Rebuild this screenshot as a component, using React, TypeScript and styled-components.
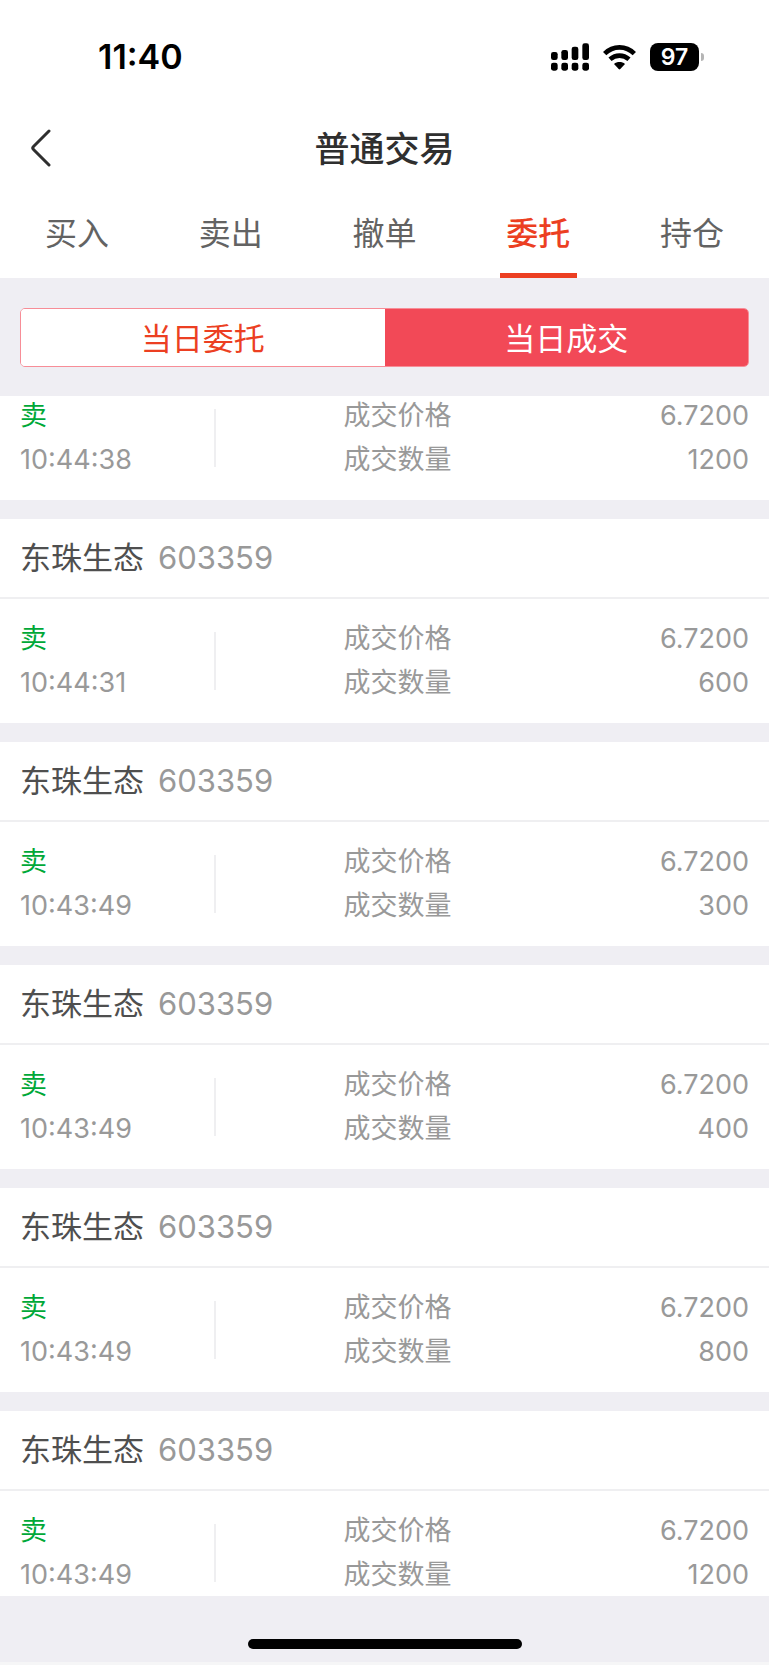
import React from "react";
import styled, { createGlobalStyle, css } from "styled-components";

const colors = {
  ink: "#2f2f2f",
  body: "#4f4f4f",
  tab: "#636363",
  muted: "#999999",
  accent: "#ec3f22",
  fill: "#f24957",
  outline: "#f78d97",
  sell: "#00a838",
  line: "#efeff1",
  canvas: "#efeef3",
};

const GlobalStyle = createGlobalStyle`
  *, *::before, *::after { box-sizing: border-box; }
  body {
    margin: 0;
    background: ${colors.canvas};
    font-family: Inter, "Noto Sans CJK SC", sans-serif;
  }
  button { font-family: inherit; cursor: pointer; }
  h1, h2, dl, dt, dd, p { margin: 0; font-weight: 400; }
`;

const Screen = styled.div`
  display: flex;
  flex-direction: column;
  min-height: 100vh;
`;

const Top = styled.header`
  background: #fff;
`;

const StatusBar = styled.div`
  display: flex;
  align-items: center;
  justify-content: space-between;
  height: 108px;
  padding: 6px 65px 0 98px;
  color: #000;
`;

const Clock = styled.time`
  font-size: 34px;
  line-height: 40px;
  font-weight: 600;
`;

const StatusIcons = styled.div`
  display: flex;
  align-items: center;
  gap: 14px;
`;

const Battery = styled.div`
  display: flex;
  align-items: center;
  gap: 2px;
`;

const BatteryLevel = styled.span`
  width: 49px;
  height: 28px;
  border-radius: 8px;
  background: #000;
  color: #fff;
  font-size: 23px;
  line-height: 28px;
  font-weight: 600;
  text-align: center;
`;

const BatteryTip = styled.span`
  width: 3px;
  height: 8px;
  border-radius: 0 4px 4px 0;
  background: #b5b5b5;
`;

const TitleBar = styled.div`
  display: grid;
  grid-template-columns: 80px 1fr 80px;
  align-items: center;
  height: 80px;
`;

const BackButton = styled.button`
  display: flex;
  align-items: center;
  height: 80px;
  padding: 0 0 0 30px;
  border: 0;
  background: none;
  color: ${colors.ink};
`;

const Title = styled.h1`
  && { font-weight: 500; }
  padding-top: 2px;
  font-size: 35px;
  line-height: 48px;
  text-align: center;
  color: ${colors.ink};
`;

const Tabs = styled.nav`
  display: grid;
  grid-template-columns: repeat(5, 1fr);
  height: 90px;
`;

const Tab = styled.button<{ $active: boolean }>`
  position: relative;
  padding: 2px 0 0;
  border: 0;
  background: none;
  font-size: 32px;
  line-height: 48px;
  color: ${colors.tab};
  ${(p) =>
    p.$active &&
    css`
      color: ${colors.accent};
      font-weight: 500;
      &::after {
        content: "";
        position: absolute;
        left: 25%;
        right: 25%;
        bottom: 0;
        height: 5px;
        background: ${colors.accent};
      }
    `}
`;

const SegmentBar = styled.div`
  padding: 30px 20px 29px;
`;

const Segments = styled.div`
  display: grid;
  grid-template-columns: 1fr 1fr;
  height: 59px;
  border: 1px solid ${colors.outline};
  border-radius: 5px;
  overflow: hidden;
`;

const Segment = styled.button<{ $active: boolean }>`
  padding: 2px 0 0;
  border: 0;
  font-size: 31px;
  line-height: 48px;
  background: ${(p) => (p.$active ? colors.fill : "#fff")};
  color: ${(p) => (p.$active ? "#fff" : colors.accent)};
`;

const TradeList = styled.main`
  display: flex;
  flex-direction: column;
  gap: 19px;
`;

const Card = styled.article`
  background: #fff;
`;

const CardHead = styled.h2`
  display: flex;
  align-items: center;
  gap: 14px;
  height: 80px;
  padding: 0 20px;
  border-bottom: 2px solid ${colors.line};
  font-size: 31px;
  line-height: 48px;
`;

const StockName = styled.span`
  color: ${colors.body};
`;

const StockCode = styled.span`
  color: ${colors.muted};
`;

type Edge = "top" | "bottom";

const CardBody = styled.div<{ $cut?: Edge }>`
  display: grid;
  grid-template-columns: 97fr 2px 64fr 203fr;
  align-items: center;
  padding: ${(p) => (p.$cut === "top" ? 2 : 22)}px 20px ${(p) => (p.$cut === "bottom" ? 3 : 22)}px;
  font-size: 27px;
  line-height: 36px;
  color: ${colors.muted};
`;

const Stack = styled.div`
  display: flex;
  flex-direction: column;
  gap: 8px;
`;

const Side = styled.p`
  color: ${colors.sell};
`;

const Divider = styled.span`
  height: 58px;
  background: ${colors.line};
`;

const Fields = styled(Stack).attrs({ as: "dl" })`
  grid-column: 4;
`;

const Field = styled.div`
  display: flex;
  justify-content: space-between;
`;

const Footer = styled.footer`
  display: flex;
  justify-content: center;
  align-items: flex-end;
  flex: 1;
  min-height: 69px;
  padding-bottom: 13px;
  border-bottom: 3px solid #f6f6f7;
`;

const HomeIndicator = styled.span`
  width: 274px;
  height: 10px;
  border-radius: 5px;
  background: #000;
`;

const SignalIcon = () => (
  <svg width="38" height="28" viewBox="0 0 114 84" aria-hidden="true">
    <rect x="0" y="27" width="20" height="24" rx="7" />
    <rect x="31" y="21" width="20" height="30" rx="7" />
    <rect x="62" y="11" width="20" height="40" rx="7" />
    <rect x="94" y="1" width="20" height="50" rx="7" />
    <rect x="0" y="59" width="20" height="24" rx="7" />
    <rect x="31" y="59" width="20" height="24" rx="7" />
    <rect x="62" y="59" width="20" height="24" rx="7" />
    <rect x="94" y="59" width="20" height="24" rx="7" />
  </svg>
);

const WifiIcon = () => (
  <svg width="33" height="25" viewBox="0 0 99 75" aria-hidden="true">
    <g fill="none" stroke="#000" strokeWidth="14">
      <path d="M5 26 C30 1 69 1 94 26" />
      <path d="M21 43 C38 28 61 28 78 43" />
    </g>
    <path d="M33 57 C42 49 57 49 66 57 L52 72 Q49.500 74.500 47 72 Z" />
  </svg>
);

const BackIcon = () => (
  <svg width="21" height="38" viewBox="0 0 21 38" fill="none" stroke="currentColor" strokeWidth="3" strokeLinecap="round" strokeLinejoin="round" aria-hidden="true">
    <path d="M19 2 L3.500 17.500 Q2 19 3.500 20.500 L19 36" />
  </svg>
);

interface Trade {
  time: string;
  price: string;
  amount: string;
  cut?: Edge;
}

const trades: Trade[] = [
  { time: "10:44:38", price: "6.7200", amount: "1200", cut: "top" },
  { time: "10:44:31", price: "6.7200", amount: "600" },
  { time: "10:43:49", price: "6.7200", amount: "300" },
  { time: "10:43:49", price: "6.7200", amount: "400" },
  { time: "10:43:49", price: "6.7200", amount: "800" },
  { time: "10:43:49", price: "6.7200", amount: "1200", cut: "bottom" },
];

const TradeCard = ({ time, price, amount, cut }: Trade) => (
  <Card>
    {cut !== "top" && (
      <CardHead>
        <StockName>东珠生态</StockName>
        <StockCode>603359</StockCode>
      </CardHead>
    )}
    <CardBody $cut={cut}>
      <Stack>
        <Side>卖</Side>
        <time>{time}</time>
      </Stack>
      <Divider />
      <Fields>
        <Field>
          <dt>成交价格</dt>
          <dd>{price}</dd>
        </Field>
        <Field>
          <dt>成交数量</dt>
          <dd>{amount}</dd>
        </Field>
      </Fields>
    </CardBody>
  </Card>
);

const tabs = ["买入", "卖出", "撤单", "委托", "持仓"];
const segments = ["当日委托", "当日成交"];

export default function App() {
  const [tab, setTab] = React.useState("委托");
  const [segment, setSegment] = React.useState("当日成交");

  return (
    <Screen>
      <GlobalStyle />
      <Top>
        <StatusBar>
          <Clock>11:40</Clock>
          <StatusIcons>
            <SignalIcon />
            <WifiIcon />
            <Battery>
              <BatteryLevel>97</BatteryLevel>
              <BatteryTip />
            </Battery>
          </StatusIcons>
        </StatusBar>
        <TitleBar>
          <BackButton aria-label="返回">
            <BackIcon />
          </BackButton>
          <Title>普通交易</Title>
        </TitleBar>
        <Tabs>
          {tabs.map((name) => (
            <Tab key={name} $active={name === tab} onClick={() => setTab(name)}>
              {name}
            </Tab>
          ))}
        </Tabs>
      </Top>
      <SegmentBar>
        <Segments>
          {segments.map((name) => (
            <Segment key={name} $active={name === segment} onClick={() => setSegment(name)}>
              {name}
            </Segment>
          ))}
        </Segments>
      </SegmentBar>
      <TradeList>
        {trades.map((trade, i) => (
          <TradeCard key={i} {...trade} />
        ))}
      </TradeList>
      <Footer>
        <HomeIndicator />
      </Footer>
    </Screen>
  );
}
